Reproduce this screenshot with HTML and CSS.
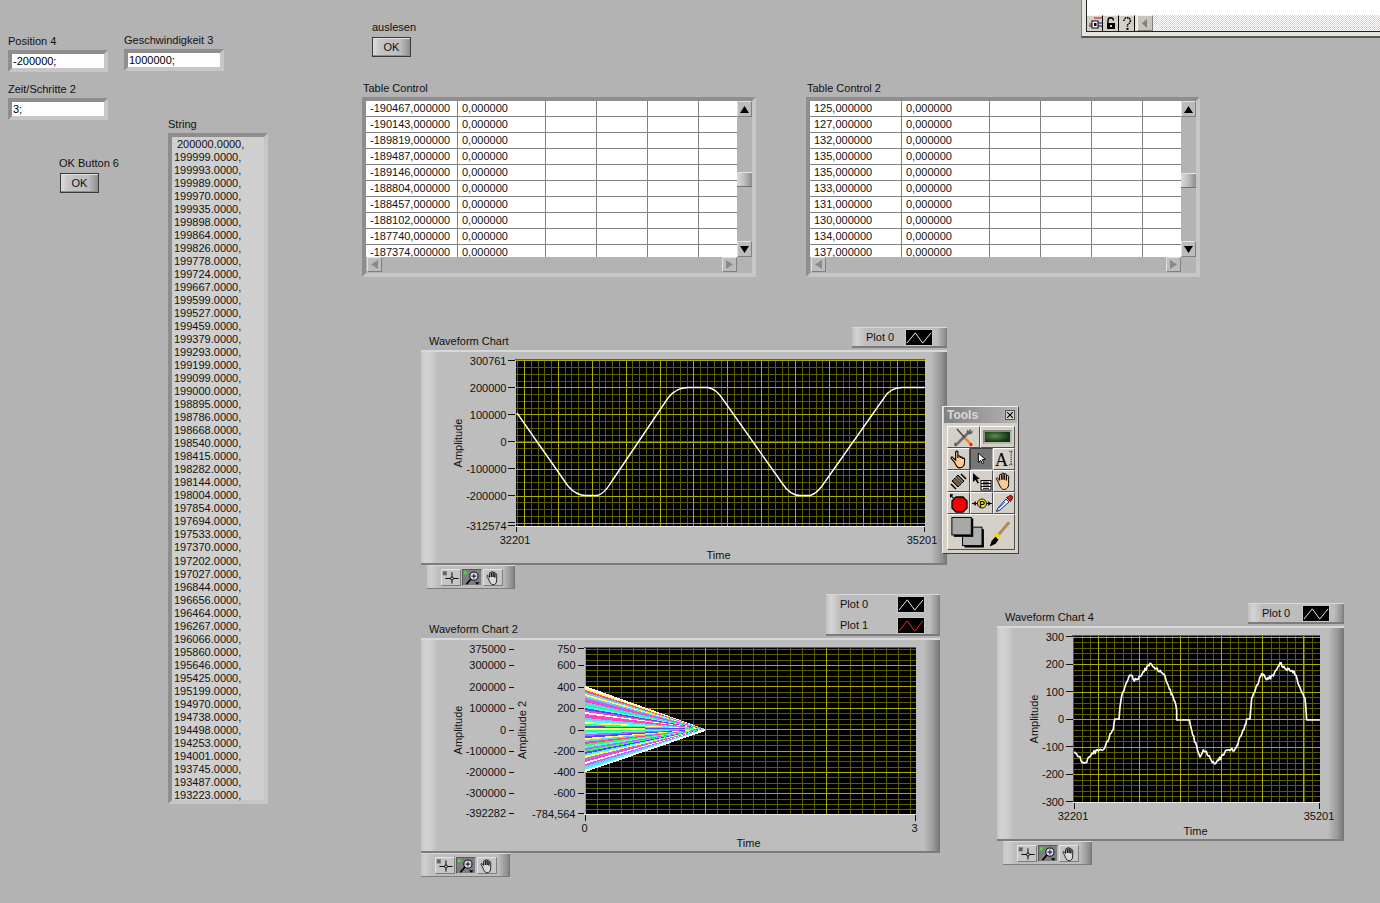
FILE: index.html
```html
<!DOCTYPE html>
<html lang="de">
<head>
<meta charset="utf-8">
<title>LabVIEW Front Panel</title>
<link rel="stylesheet" href="styles.css">
</head>
<body>
<svg class="defs" width="0" height="0" aria-hidden="true">
  <defs>
    <symbol id="i-cross" viewBox="0 0 19 16">
      <rect x="1" y="1" width="4" height="4" fill="#4d6b4d" stroke="#8a8a8a" stroke-width=".6"/>
      <path d="M10.5 2v12M3.5 8.5h14" stroke="#000" stroke-width="1" fill="none"/>
      <circle cx="10.5" cy="8.5" r="1.6" fill="#c4c4c4" stroke="#000" stroke-width=".9"/>
    </symbol>
    <symbol id="i-zoom" viewBox="0 0 19 16">
      <rect x="1" y="1" width="3" height="3" fill="#39e639"/>
      <circle cx="11.5" cy="6" r="4.3" fill="#d8dcf4" stroke="#000" stroke-width="1"/>
      <path d="M9 6h5M11.5 3.5v5" stroke="#000" stroke-width="1"/>
      <path d="M8.4 9 3.6 14.6" stroke="#000" stroke-width="1.8"/>
      <path d="M12.5 12.5h5l-2.5 2.5z" fill="#000"/>
    </symbol>
    <symbol id="i-hand" viewBox="0 0 16 16">
      <path d="M3.5 9 2 6.5C1.5 5.500 3 5 3.500 6L4.500 7.500V3.500a.9.9 0 0 1 1.800 0V7 2.500a.9.9 0 0 1 1.800 0V7 3a.9.9 0 0 1 1.800 0V7.500 4.500a.9.9 0 0 1 1.800 0V10C11.900 13 10 14.800 8 14.800 6 14.800 4.500 12 3.500 9Z" fill="currentColor" stroke="#000" stroke-width=".8"/>
    </symbol>
    <symbol id="i-trace" viewBox="0 0 28 16">
      <path d="M1 14 10 3 18 14 27 3" fill="none" stroke="currentColor" stroke-width="1"/>
    </symbol>
  </defs>
</svg>

<main class="canvas">

  <section class="win">
    <div class="win-body"></div>
    <div class="win-status">
      <span class="st-btn"><svg width="14" height="15" viewBox="0 0 14 15"><path d="M1 8h3M6 2h8" stroke="#e00000" stroke-width="1.200"/><path d="M1 10h3M10 7h4M10 10h4" stroke="#0000d0" stroke-width="1"/><rect x="4" y="5" width="6" height="7" fill="#fff" stroke="#000"/><rect x="6" y="7" width="2.500" height="3" fill="#000"/></svg></span>
      <span class="st-btn"><svg width="14" height="15" viewBox="0 0 14 15"><path d="M4 7V4.500a2.700 2.700 0 0 1 5.400 0" fill="none" stroke="#000" stroke-width="1.400"/><rect x="3" y="7" width="8" height="6" fill="#000"/><rect x="6" y="9" width="2" height="2" fill="#d4d0c8"/></svg></span>
      <span class="st-btn"><svg width="14" height="15" viewBox="0 0 14 15"><path d="M4 5a3.200 3.200 0 1 1 5 2.500L7.500 9v2" fill="none" stroke="#000" stroke-width="1.600" stroke-dasharray="1.600 .7"/><rect x="6.500" y="12" width="2" height="2" fill="#000"/></svg></span>
      <span class="st-arrow"><svg width="8" height="9" viewBox="0 0 8 9"><path d="M6 0v9L1 4.500z" fill="#808080"/></svg></span>
      <span class="st-fill"></span>
    </div>
  </section>

  <div class="ctl ctl-pos"><label class="lbl">Position 4</label><div class="field">-200000;</div></div>
  <div class="ctl ctl-gesch"><label class="lbl">Geschwindigkeit 3</label><div class="field">1000000;</div></div>
  <div class="ctl ctl-zeit"><label class="lbl">Zeit/Schritte 2</label><div class="field">3;</div></div>
  <div class="ctl ctl-ok6"><label class="lbl">OK Button 6</label><div class="okbtn">OK</div></div>
  <div class="ctl ctl-aus"><label class="lbl">auslesen</label><div class="okbtn">OK</div></div>

  <div class="ctl ctl-string">
    <label class="lbl">String</label>
    <div class="strbox"><div class="strtext"><span class="str-first">200000.0000,</span>
199999.0000,
199993.0000,
199989.0000,
199970.0000,
199935.0000,
199898.0000,
199864.0000,
199826.0000,
199778.0000,
199724.0000,
199667.0000,
199599.0000,
199527.0000,
199459.0000,
199379.0000,
199293.0000,
199199.0000,
199099.0000,
199000.0000,
198895.0000,
198786.0000,
198668.0000,
198540.0000,
198415.0000,
198282.0000,
198144.0000,
198004.0000,
197854.0000,
197694.0000,
197533.0000,
197370.0000,
197202.0000,
197027.0000,
196844.0000,
196656.0000,
196464.0000,
196267.0000,
196066.0000,
195860.0000,
195646.0000,
195425.0000,
195199.0000,
194970.0000,
194738.0000,
194498.0000,
194253.0000,
194001.0000,
193745.0000,
193487.0000,
193223.0000,</div></div>
  </div>

  <div class="ctl ctl-t1">
    <label class="lbl">Table Control</label>
    <div class="tbl">
      <div class="tbl-clip"><table>
        <tr><td>-190467,000000</td><td>0,000000</td><td></td><td></td><td></td><td></td></tr>
        <tr><td>-190143,000000</td><td>0,000000</td><td></td><td></td><td></td><td></td></tr>
        <tr><td>-189819,000000</td><td>0,000000</td><td></td><td></td><td></td><td></td></tr>
        <tr><td>-189487,000000</td><td>0,000000</td><td></td><td></td><td></td><td></td></tr>
        <tr><td>-189146,000000</td><td>0,000000</td><td></td><td></td><td></td><td></td></tr>
        <tr><td>-188804,000000</td><td>0,000000</td><td></td><td></td><td></td><td></td></tr>
        <tr><td>-188457,000000</td><td>0,000000</td><td></td><td></td><td></td><td></td></tr>
        <tr><td>-188102,000000</td><td>0,000000</td><td></td><td></td><td></td><td></td></tr>
        <tr><td>-187740,000000</td><td>0,000000</td><td></td><td></td><td></td><td></td></tr>
        <tr><td>-187374,000000</td><td>0,000000</td><td></td><td></td><td></td><td></td></tr>
      </table></div>
      <div class="vbar">
        <span class="sb"><svg width="9" height="7" viewBox="0 0 9 7"><path d="M4.500 0 9 7H0z" fill="#000"/></svg></span>
        <span class="thumb thumb-a"></span>
        <span class="sb"><svg width="9" height="7" viewBox="0 0 9 7"><path d="M4.500 7 9 0H0z" fill="#000"/></svg></span>
      </div>
      <div class="hbar">
        <span class="sb"><svg width="7" height="9" viewBox="0 0 7 9"><path d="M0 4.500 7 0v9z" fill="#8a8a8a"/></svg></span>
        <span class="sb"><svg width="7" height="9" viewBox="0 0 7 9"><path d="M7 4.500 0 0v9z" fill="#8a8a8a"/></svg></span>
      </div>
    </div>
  </div>

  <div class="ctl ctl-t2">
    <label class="lbl">Table Control 2</label>
    <div class="tbl">
      <div class="tbl-clip"><table>
        <tr><td>125,000000</td><td>0,000000</td><td></td><td></td><td></td><td></td></tr>
        <tr><td>127,000000</td><td>0,000000</td><td></td><td></td><td></td><td></td></tr>
        <tr><td>132,000000</td><td>0,000000</td><td></td><td></td><td></td><td></td></tr>
        <tr><td>135,000000</td><td>0,000000</td><td></td><td></td><td></td><td></td></tr>
        <tr><td>135,000000</td><td>0,000000</td><td></td><td></td><td></td><td></td></tr>
        <tr><td>133,000000</td><td>0,000000</td><td></td><td></td><td></td><td></td></tr>
        <tr><td>131,000000</td><td>0,000000</td><td></td><td></td><td></td><td></td></tr>
        <tr><td>130,000000</td><td>0,000000</td><td></td><td></td><td></td><td></td></tr>
        <tr><td>134,000000</td><td>0,000000</td><td></td><td></td><td></td><td></td></tr>
        <tr><td>137,000000</td><td>0,000000</td><td></td><td></td><td></td><td></td></tr>
      </table></div>
      <div class="vbar">
        <span class="sb"><svg width="9" height="7" viewBox="0 0 9 7"><path d="M4.500 0 9 7H0z" fill="#000"/></svg></span>
        <span class="thumb thumb-b"></span>
        <span class="sb"><svg width="9" height="7" viewBox="0 0 9 7"><path d="M4.500 7 9 0H0z" fill="#000"/></svg></span>
      </div>
      <div class="hbar">
        <span class="sb"><svg width="7" height="9" viewBox="0 0 7 9"><path d="M0 4.500 7 0v9z" fill="#8a8a8a"/></svg></span>
        <span class="sb"><svg width="7" height="9" viewBox="0 0 7 9"><path d="M7 4.500 0 0v9z" fill="#8a8a8a"/></svg></span>
      </div>
    </div>
  </div>

  <!-- Waveform Chart -->
  <label class="lbl chart-title ct1">Waveform Chart</label>
  <div class="legend lg1">
    <div class="lg-row"><span class="lg-name">Plot 0</span><span class="swatch swatch-w"><svg width="26" height="15" viewBox="0 0 28 16"><use href="#i-trace"/></svg></span></div>
  </div>
  <section class="panel pn1">
    <svg class="chart" id="chart1" width="526" height="215" viewBox="421 350 526 215">
      <rect class="plot-bg" x="516" y="360" width="409" height="166"/>
      <g class="grid"></g>
      <path class="curve" d="M517 413 568 486Q576 495.500 586 495.500L597 495.500Q604 494 610 484L668 398Q676 387.500 688 387.500L708 387.500Q716 389 722 398L782 483Q790 495.500 800 495.500L810 495.500Q816 494 822 486L884 398Q890 387.500 902 387.500L924.500 387.500"/>
      <path class="plot-edge-t" d="M515 359.500h410"/><path class="plot-edge-b" d="M515 526.500h410"/>
      <path class="tick" d="M508 360.500h7M508 387.500h7M508 414.500h7M508 441.500h7M508 468.500h7M508 495.500h7M508 522.500h7M508 525.500h7M516.500 527v5M924.500 527v5"/>
      <g class="ticks">
        <text class="e" x="506.500" y="365">300761</text><text class="e" x="506.500" y="392">200000</text><text class="e" x="506.500" y="419">100000</text><text class="e" x="506.500" y="446">0</text><text class="e" x="506.500" y="473">-100000</text><text class="e" x="506.500" y="500">-200000</text><text class="e" x="506.500" y="530">-312574</text>
        <text class="m" x="515" y="544">32201</text><text class="m" x="922" y="544">35201</text><text class="m" x="718.500" y="559">Time</text>
        <text class="m" transform="translate(462 443) rotate(-90)">Amplitude</text>
      </g>
    </svg>
  </section>
  <div class="palette pl1">
    <span class="pb"><svg width="19" height="16"><use href="#i-cross"/></svg></span>
    <span class="pb pb-on"><svg width="19" height="16"><use href="#i-zoom"/></svg></span>
    <span class="pb"><svg width="19" height="16"><use href="#i-hand" class="hand-w"/></svg></span>
  </div>

  <!-- Waveform Chart 2 -->
  <label class="lbl chart-title ct2">Waveform Chart 2</label>
  <div class="legend lg2">
    <div class="lg-row"><span class="lg-name">Plot 0</span><span class="swatch swatch-w"><svg width="26" height="15" viewBox="0 0 28 16"><use href="#i-trace"/></svg></span></div>
    <div class="lg-row"><span class="lg-name">Plot 1</span><span class="swatch swatch-r"><svg width="26" height="15" viewBox="0 0 28 16"><use href="#i-trace"/></svg></span></div>
  </div>
  <section class="panel pn2">
    <svg class="chart" id="chart2" width="519" height="215" viewBox="421 638 519 215">
      <rect class="plot-bg" x="585" y="648" width="331" height="166"/>
      <g class="grid"></g>
      <g class="rainbow"></g>
      <path class="plot-edge-t" d="M584 647.500h332"/><path class="plot-edge-b" d="M584 814.500h332"/>
      <path class="tick" d="M509 649.500h5M509 665.500h5M509 687.500h5M509 708.500h5M509 730.500h5M509 751.500h5M509 772.500h5M509 793.500h5M509 813.500h5M578 648.500h6M578 665.500h6M578 687.500h6M578 708.500h6M578 730.500h6M578 751.500h6M578 772.500h6M578 793.500h6M578 813.500h6M585.500 815v6M915.500 815v6"/>
      <g class="ticks">
        <text class="e" x="506" y="653">375000</text><text class="e" x="506" y="669">300000</text><text class="e" x="506" y="691">200000</text><text class="e" x="506" y="712">100000</text><text class="e" x="506" y="734">0</text><text class="e" x="506" y="755">-100000</text><text class="e" x="506" y="776">-200000</text><text class="e" x="506" y="797">-300000</text><text class="e" x="506" y="817">-392282</text>
        <text class="e" x="575.500" y="653">750</text><text class="e" x="575.500" y="669">600</text><text class="e" x="575.500" y="691">400</text><text class="e" x="575.500" y="712">200</text><text class="e" x="575.500" y="734">0</text><text class="e" x="575.500" y="755">-200</text><text class="e" x="575.500" y="776">-400</text><text class="e" x="575.500" y="797">-600</text><text class="e" x="575.500" y="818">-784,564</text>
        <text class="m" x="584.500" y="832">0</text><text class="m" x="914.500" y="832">3</text><text class="m" x="748.500" y="847">Time</text>
        <text class="m" transform="translate(462 730) rotate(-90)">Amplitude</text>
        <text class="m" transform="translate(526 730) rotate(-90)">Amplitude 2</text>
      </g>
    </svg>
  </section>
  <div class="palette pl2">
    <span class="pb"><svg width="19" height="16"><use href="#i-cross"/></svg></span>
    <span class="pb pb-on"><svg width="19" height="16"><use href="#i-zoom"/></svg></span>
    <span class="pb"><svg width="19" height="16"><use href="#i-hand" class="hand-w"/></svg></span>
  </div>

  <!-- Waveform Chart 4 -->
  <label class="lbl chart-title ct4">Waveform Chart 4</label>
  <div class="legend lg4">
    <div class="lg-row"><span class="lg-name">Plot 0</span><span class="swatch swatch-w"><svg width="26" height="15" viewBox="0 0 28 16"><use href="#i-trace"/></svg></span></div>
  </div>
  <section class="panel pn4">
    <svg class="chart" id="chart4" width="347" height="215" viewBox="997 626 347 215">
      <rect class="plot-bg" x="1073" y="636" width="247" height="166"/>
      <g class="grid"></g>
      <g transform="translate(995 595) scale(.33333)">
        <polyline class="curve-thick" points=""/>
      </g>
      <path class="plot-edge-t" d="M1072 635.500h248"/><path class="plot-edge-b" d="M1072 802.500h248"/>
      <path class="tick" d="M1066 636.500h7M1066 664.500h7M1066 691.500h7M1066 719.500h7M1066 746.500h7M1066 774.500h7M1066 801.500h7M1074.500 803v6M1319.500 803v6"/>
      <g class="ticks">
        <text class="e" x="1064" y="641">300</text><text class="e" x="1064" y="668">200</text><text class="e" x="1064" y="696">100</text><text class="e" x="1064" y="723">0</text><text class="e" x="1064" y="751">-100</text><text class="e" x="1064" y="778">-200</text><text class="e" x="1064" y="806">-300</text>
        <text class="m" x="1073" y="820">32201</text><text class="m" x="1319" y="820">35201</text><text class="m" x="1195.500" y="835">Time</text>
        <text class="m" transform="translate(1038 719) rotate(-90)">Amplitude</text>
      </g>
    </svg>
  </section>
  <div class="palette pl4">
    <span class="pb"><svg width="19" height="16"><use href="#i-cross"/></svg></span>
    <span class="pb pb-on"><svg width="19" height="16"><use href="#i-zoom"/></svg></span>
    <span class="pb"><svg width="19" height="16"><use href="#i-hand" class="hand-w"/></svg></span>
  </div>

  <!-- Tools palette -->
  <aside class="tools">
    <header class="tools-title"><span>Tools</span><span class="tools-x"><svg width="7" height="7" viewBox="0 0 7 7"><path d="M0 0l7 7M7 0 0 7" stroke="#000" stroke-width="1.300"/></svg></span></header>
    <div class="tools-auto">
      <span class="tool"><svg width="22" height="20" viewBox="0 0 22 20"><path d="M18 3 4 17" stroke="#6e6e6e" stroke-width="2.600"/><path d="M15 1.500c-1 2 .5 4.500 3.500 3.500l2-2-1.500 3.500-3 1-2.500-2.500zM2 15l3 3-2.500 1.500-1.500-1.500z" fill="#5a5a5a"/><path d="M4 2 12 11" stroke="#444" stroke-width="1.500"/><path d="M12 11l5 5.500" stroke="#f08018" stroke-width="2.600"/><path d="M17 16.500l2 2" stroke="#d81818" stroke-width="2.600"/></svg></span>
      <span class="tool"><span class="led"></span></span>
    </div>
    <div class="tools-grid">
      <span class="tool"><svg width="20" height="20" viewBox="0 0 18 18"><path d="M5 12 2 8.500c-.7-1 .6-1.800 1.300-1L6 10V3c0-1.500 2-1.500 2 0v5l0-1c0-1.300 2-1.300 2 0v1c0-1.200 2-1.200 2 0v1c0-1 2-1 2 0v3c0 3-2 5-4.500 5S6.500 15 5 12Z" fill="#ffc994" stroke="#000" stroke-width="1"/></svg></span>
      <span class="tool tool-on"><svg width="11" height="14" viewBox="0 0 14 17"><path d="M3 1v12l3-2.800 2 4.300 2-1-2-4.200 4-.3z" fill="#fff" stroke="#000" stroke-width="1.200"/></svg></span>
      <span class="tool"><svg width="21" height="20" viewBox="0 0 21 20"><text class="glyph-a" x="1" y="17">A</text><path d="M16 2h4M18 2v14M16 16h4" stroke="#000" stroke-width=".9" stroke-dasharray="1.200 .8"/></svg></span>

      <span class="tool"><svg width="19" height="19" viewBox="0 0 19 19"><path d="M9 3 15 9 9 15 3 9z" fill="#5a4a38" stroke="#000"/><path d="M6 5l7 7M4.500 7l7 7M8 4l7 7" stroke="#c8b498" stroke-width=".6"/><path d="M2 12l5 5M12 2l5 5" stroke="#000" stroke-width="1.600"/></svg></span>
      <span class="tool"><svg width="20" height="19" viewBox="0 0 20 19"><path d="M1 1v9l2.500-2 2 3.500 1.500-.8-2-3.500 3-.2z" fill="#000"/><rect x="9" y="8.500" width="10" height="9.500" fill="#fff" stroke="#000"/><path d="M9 11.500h10M9 14.500h10M11 10.200h6M11 13h6M11 16.300h6" stroke="#000" stroke-width="1"/></svg></span>
      <span class="tool"><svg width="20" height="20" viewBox="0 0 16 16"><path d="M3.500 9 2 6.500C1.500 5.500 3 5 3.500 6L4.500 7.500V3.500a.9.9 0 0 1 1.800 0V7 2.500a.9.9 0 0 1 1.800 0V7 3a.9.9 0 0 1 1.800 0V7.500 4.500a.9.9 0 0 1 1.800 0V10C11.900 13 10 14.800 8 14.800 6 14.800 4.500 12 3.500 9Z" fill="#ffc994" stroke="#000" stroke-width=".8"/></svg></span>

      <span class="tool"><svg width="20" height="20" viewBox="0 0 20 20"><path d="M7 4h7l4 4v7l-4 4H7l-4-4V8z" fill="#f00000" stroke="#000" stroke-width="1.300"/><path d="M1 1v4l1.300-1.200 2 2 .8-.8-2-2L4.500 1.500z" fill="#000"/></svg></span>
      <span class="tool"><svg width="20" height="15" viewBox="0 0 21 15"><path d="M0 7.500h21" stroke="#000"/><path d="M1 7.500 4 5v5zM20 7.500 17 5v5z" fill="#000"/><circle cx="10.500" cy="7.500" r="4.700" fill="#f8e820" stroke="#000"/><text class="glyph-p" x="10.500" y="10.700">P</text></svg></span>
      <span class="tool"><svg width="19" height="19" viewBox="0 0 19 19"><path d="M11 5 3 14l-1.500 3.500L5 16l9-8z" fill="#e4eeff" stroke="#1c2c6c" stroke-width="1"/><path d="M4 14l6-6" stroke="#3070e8" stroke-width="1"/><path d="M11.500 3.500l4 4 1.500-2.500c1-1 .5-3-1-3.500-1-.3-2 .3-2.500 1z" fill="#e81818" stroke="#000" stroke-width=".8"/></svg></span>
    </div>
    <div class="tools-color">
      <svg width="68" height="35" viewBox="0 0 68 35">
        <rect x="17" y="14" width="20" height="19" fill="#000"/><rect x="15" y="12" width="20" height="19" fill="#b0b0b0" stroke="#000"/>
        <rect x="6" y="3" width="20" height="19" fill="#000"/><rect x="4" y="2" width="20" height="18" fill="#a8a8a8" stroke="#000"/>
        <path d="M63 7 52 20" stroke="#b08858" stroke-width="3"/><path d="M52.500 19.500l-4.500 5" stroke="#f8d800" stroke-width="5"/><path d="M49 22l3 3-3 4-6 3 2-6z" fill="#000"/>
      </svg>
    </div>
  </aside>
</main>
<script src="script.js"></script>
</body>
</html>
```

FILE: styles.css
```css
* { box-sizing: border-box; }
html, body { margin: 0; padding: 0; background: #b3b3b3; }
body { font-family: "Liberation Sans", Arial, sans-serif; font-size: 11px; color: #000; overflow: hidden; }
.defs { position: absolute; }

.canvas { position: relative; width: 1380px; height: 903px; background: #b3b3b3; overflow: hidden; }

.lbl { display: block; font-size: 11px; line-height: 13px; white-space: nowrap; color: #111; }

/* Free-canvas placement of front-panel objects */
.ctl { position: absolute; display: flex; flex-direction: column; }
.ctl-pos { left: 8px; top: 35px; }
.ctl-gesch { left: 124px; top: 34px; }
.ctl-zeit { left: 8px; top: 83px; }
.ctl-ok6 { left: 59px; top: 157px; gap: 3px; }
.ctl-aus { left: 372px; top: 21px; gap: 3px; }
.ctl-string { left: 168px; top: 118px; gap: 2px; }
.ctl-t1 { left: 362px; top: 82px; gap: 2px; }
.ctl-t2 { left: 806px; top: 82px; gap: 2px; }
.ctl-t1 .lbl, .ctl-t2 .lbl { margin-left: 1px; }

.field {
  width: 100px; height: 22px;
  margin-top: 2px;
  background: #fdfdfd;
  border-style: solid; border-width: 4px;
  border-color: #8e8e8e #c6c6c6 #c6c6c6 #8e8e8e;
  padding-left: 1px;
  font-size: 11px; line-height: 14px;
}

.okbtn {
  width: 39px; height: 20px;
  margin-left: 1px;
  border: 1px solid #3a3a3a;
  background: linear-gradient(90deg, #dcdcdc 0, #c4c4c4 20%, #bcbcbc 75%, #8c8c8c 100%);
  box-shadow: inset 0 1px 0 #e4e4e4, inset 0 -1px 0 #909090;
  text-align: center; font-size: 11px; line-height: 18px; color: #111;
}
.ctl-aus .okbtn { margin-left: 0; }

.strbox {
  width: 100px; height: 671px;
  border-style: solid; border-width: 4px;
  border-color: #8e8e8e #c6c6c6 #c6c6c6 #8e8e8e;
  background: #cfcfcf;
  padding: 1px 0 0 2px;
}
.strtext { white-space: pre-line; font-size: 11px; line-height: 13.02px; color: #111; }
.str-first { padding-left: 3px; }

.tbl {
  display: grid;
  grid-template-columns: 371px 15px;
  grid-template-rows: 156px 16px;
  width: 394px; height: 180px;
  border-style: solid; border-width: 4px;
  border-color: #8e8e8e #c6c6c6 #c6c6c6 #8e8e8e;
  background: #b3b3b3;
}
.tbl-clip { overflow: hidden; background: #fff; }
.tbl table { border-collapse: separate; border-spacing: 0; table-layout: fixed; width: 371px; }
.tbl td {
  height: 16px; padding: 0 0 0 4px;
  border-right: 1px solid #808080; border-bottom: 1px solid #808080;
  font-size: 11px; line-height: 15px; white-space: nowrap; color: #111;
}
.tbl td:nth-child(1) { width: 92px; }
.tbl td:nth-child(2) { width: 88px; }
.tbl td:nth-child(3), .tbl td:nth-child(4), .tbl td:nth-child(5) { width: 51px; }
.tbl td:nth-child(6) { width: 38px; border-right: 0; }

.sb {
  display: flex; align-items: center; justify-content: center;
  width: 15px; height: 15px;
  background: #bcbcbc;
  border-style: solid; border-width: 1px;
  border-color: #e0e0e0 #808080 #808080 #e0e0e0;
}
.vbar { position: relative; display: flex; flex-direction: column; justify-content: space-between; background: #b3b3b3; }
.vbar .sb { height: 16px; }
.hbar { display: flex; justify-content: space-between; background: #b3b3b3; padding-left: 1px; height: 16px; }
.thumb {
  position: absolute; left: 0; width: 15px; height: 15px;
  background: linear-gradient(90deg, #dadada, #c0c0c0 45%, #8e8e8e);
  border-top: 1px solid #e4e4e4; border-bottom: 1px solid #707070;
}
.thumb-a { top: 71px; }
.thumb-b { top: 72px; }

/* Charts */
.chart-title { position: absolute; }
.ct1 { left: 429px; top: 335px; }
.ct2 { left: 429px; top: 623px; }
.ct4 { left: 1005px; top: 611px; }

.panel, .legend, .palette {
  background-color: #bdbdbd;
  background-repeat: no-repeat;
}
.panel {
  position: absolute;
  background-image:
    linear-gradient(#d8d8d8, #d8d8d8),
    linear-gradient(#7c7c7c, #7c7c7c),
    linear-gradient(90deg, #c4c4c4 0, #d4d4d4 4px, #cfcfcf 10px, #bdbdbd 16px),
    linear-gradient(90deg, #bdbdbd 0, #9a9a9a 9px, #7a7a7a 15px, #707070 16px);
  background-size: 100% 2px, 100% 2px, 16px 100%, 16px 100%;
  background-position: 0 0, 0 100%, 0 0, 100% 0;
}
.pn1 { left: 421px; top: 350px; width: 526px; height: 215px; }
.pn2 { left: 421px; top: 638px; width: 519px; height: 215px; }
.pn4 { left: 997px; top: 626px; width: 347px; height: 215px; }

.chart { display: block; }
.plot-bg { fill: #000; }
.plot-edge-t { stroke: #5a5a5a; stroke-width: 1; }
.plot-edge-b { stroke: #ececec; stroke-width: 1; }
.tick { stroke: #111; stroke-width: 1; fill: none; shape-rendering: crispEdges; }
.ticks text { font-family: "Liberation Sans", Arial, sans-serif; font-size: 11px; fill: #111; }
.ticks .e { text-anchor: end; }
.ticks .m { text-anchor: middle; }
.grid line { shape-rendering: crispEdges; stroke-width: 1; }
.grid .mn { stroke: #5c5c00; }
.grid .mj { stroke: #acac00; }
.curve { fill: none; stroke: #fff; stroke-width: 1.400; stroke-linejoin: round; }
.curve-thick { fill: none; stroke: #fff; stroke-width: 5; stroke-linejoin: round; }
.rainbow line { shape-rendering: crispEdges; stroke-width: 2; }

.legend {
  position: absolute;
  display: flex; flex-direction: column; gap: 4px;
  padding: 2px 14px 2px 14px;
  background-image:
    linear-gradient(#d8d8d8, #d8d8d8),
    linear-gradient(#7c7c7c, #7c7c7c),
    linear-gradient(90deg, #c0c0c0 0, #d4d4d4 5px, #bdbdbd 14px),
    linear-gradient(90deg, #bdbdbd 0, #8a8a8a 9px, #707070 10px);
  background-size: 100% 1px, 100% 2px, 14px 100%, 10px 100%;
  background-position: 0 0, 0 100%, 0 0, 100% 0;
}
.lg1 { left: 852px; top: 327px; width: 95px; height: 21px; }
.lg2 { left: 826px; top: 594px; width: 114px; height: 42px; }
.lg4 { left: 1248px; top: 603px; width: 96px; height: 21px; }
.lg-row { display: flex; align-items: center; justify-content: space-between; height: 17px; font-size: 11px; color: #111; }
.lg-name { margin-top: -2px; }
.swatch {
  display: flex; align-items: center; justify-content: center;
  width: 28px; height: 17px; background: #000; border: 1px solid #c8c8c8;
}
.lg2 .swatch { margin-right: 1px; }
.swatch-w { color: #fff; }
.swatch-r { color: #ff3030; }

.palette {
  position: absolute;
  display: flex; align-items: center; gap: 1px;
  padding: 1px 0 0 14px;
  height: 24px;
  background-image:
    linear-gradient(#d8d8d8, #d8d8d8),
    linear-gradient(#7c7c7c, #7c7c7c),
    linear-gradient(90deg, #c4c4c4, #d0d0d0 4px, #bdbdbd 12px),
    linear-gradient(90deg, #bdbdbd, #8a8a8a 10px, #707070 12px);
  background-size: 100% 1px, 100% 1px, 12px 100%, 12px 100%;
  background-position: 0 0, 0 100%, 0 0, 100% 0;
}
.pl1 { left: 427px; top: 565px; width: 88px; }
.pl2 { left: 421px; top: 853px; width: 89px; }
.pl4 { left: 1003px; top: 841px; width: 89px; }
.pb {
  display: flex; width: 20px; height: 17px; align-items: center; justify-content: center;
  background: #c6c6c6;
  border-style: solid; border-width: 1px;
  border-color: #e4e4e4 #7c7c7c #7c7c7c #e4e4e4;
  color: #d8d8d8;
}
.pb-on { background: #7e7e7e; border-color: #5c5c5c #bcbcbc #bcbcbc #5c5c5c; }
.hand-w { color: #d8d8d8; }

/* Tools floating palette */
.tools {
  position: absolute; left: 942px; top: 406px; width: 77px; height: 148px;
  display: flex; flex-direction: column;
  padding: 0 3px 0 4px;
  background: #d4d0c8;
  border-style: solid; border-width: 1px;
  border-color: #f0f0f0 #404040 #404040 #f0f0f0;
}
.tools-title {
  display: flex; align-items: center; justify-content: space-between;
  height: 16px; margin: 0 -2px 3px -3px; padding: 0 2px 0 3px;
  background: linear-gradient(90deg, #808080, #b4b4b4);
  font-size: 12px; font-weight: bold; color: #d8d8d8;
}
.tools-x {
  display: flex; align-items: center; justify-content: center;
  width: 10px; height: 10px; background: #d4d0c8;
  border: 1px solid #555;
}
.tools-x svg { width: 6px; height: 6px; }
.tool {
  display: flex; align-items: center; justify-content: center;
  background: #d4d0c8;
  border-style: solid; border-width: 1px;
  border-color: #fafafa #505050 #505050 #fafafa;
}
.tools-auto { display: grid; grid-template-columns: 33px 35px; height: 22px; }
.tools-grid { display: grid; grid-template-columns: 23px 23px 22px; grid-auto-rows: 22px; }
.tool-on { background: #767676; border-color: #404040 #b0b0b0 #b0b0b0 #404040; }
.led {
  display: block; width: 29px; height: 14px;
  border: 2px solid; border-color: #8a8a7c #b8b8a8 #b8b8a8 #8a8a7c;
  background: radial-gradient(ellipse at 40% 40%, #5a8c4c, #123414 70%);
}
.tools-color { height: 36px; border-style: solid; border-width: 1px; border-color: #fafafa #505050 #505050 #fafafa; display: flex; }
.glyph-a { font-family: "Liberation Serif", serif; font-size: 19px; fill: #000; }
.glyph-p { font-family: "Liberation Sans", sans-serif; font-size: 9px; font-weight: bold; text-anchor: middle; fill: #000; }

/* Window corner at top right */
.win {
  position: absolute; left: 1081px; top: 0; width: 299px; height: 38px;
  display: flex; flex-direction: column;
  padding: 0 0 4px 4px;
  background: #e6e4dc;
  border-left: 1px solid #808080;
  border-bottom: 2px solid #555;
}
.win-body { height: 15px; background: #fff; border-left: 1px solid #222; }
.win-status { display: flex; height: 17px; border-left: 1px solid #222; border-bottom: 1px solid #222; }
.st-btn {
  display: flex; width: 16px; height: 16px; align-items: center; justify-content: center;
  background: #d4d0c8;
  border-right: 1px solid #000;
  border-top: 1px solid #f4f4f4;
}
.st-arrow {
  display: flex; width: 16px; height: 16px; margin-left: 2px; align-items: center; justify-content: center;
  background: #c8c4bc;
  border-style: solid; border-width: 1px;
  border-color: #f4f4f4 #808080 #808080 #f4f4f4;
}
.st-fill {
  flex: 1;
  background-color: #fff;
  background-image: conic-gradient(#d8d5ce 25%, transparent 0 50%, #d8d5ce 0 75%, transparent 0);
  background-size: 2px 2px;
}
```

FILE: script.js
```js
const NS = 'http://www.w3.org/2000/svg';

const charts = [
  { id: 'chart1', x: [516, 925], y: [360, 526], v: [524, 33.9, 5], h: [360.2, 27.1, 4] },
  { id: 'chart2', x: [585, 916], y: [648, 814], v: [585, 120.3, 10], h: [665, 21.4, 4] },
  { id: 'chart4', x: [1073, 1320], y: [636, 802], v: [1098, 41.1, 5], h: [636.7, 27.5, 5] }
];

function line(parent, x1, y1, x2, y2, cls, color) {
  const el = document.createElementNS(NS, 'line');
  el.setAttribute('x1', x1);
  el.setAttribute('y1', y1);
  el.setAttribute('x2', x2);
  el.setAttribute('y2', y2);
  if (cls) el.setAttribute('class', cls);
  if (color) el.setAttribute('stroke', color);
  parent.appendChild(el);
}

function positions(start, step, lo, hi) {
  const out = [];
  let p = start;
  while (p - step >= lo) p -= step;
  for (; p <= hi; p += step) out.push(p);
  return out;
}

charts.forEach(c => {
  const g = document.querySelector('#' + c.id + ' .grid');
  const crisp = p => Math.round(p) + 0.5;
  const [x0, x1] = c.x;
  const [y0, y1] = c.y;
  positions(c.v[0], c.v[1] / c.v[2], x0, x1 - 1).forEach(p => line(g, crisp(p), y0, crisp(p), y1, 'mn'));
  positions(c.h[0], c.h[1] / c.h[2], y0, y1 - 1).forEach(p => line(g, x0, crisp(p), x1, crisp(p), 'mn'));
  positions(c.v[0], c.v[1], x0, x1 - 1).forEach(p => line(g, crisp(p), y0, crisp(p), y1, 'mj'));
  positions(c.h[0], c.h[1], y0, y1 - 1).forEach(p => line(g, x0, crisp(p), x1, crisp(p), 'mj'));
});

// Many overlaid plots converging on one point (Waveform Chart 2).
const colors = ['#ffffff', '#ff44bb', '#33ff44', '#5544ff', '#44ffff', '#ffff55', '#ff4488', '#bb66ff', '#22ff88', '#66ccff'];
const rainbow = document.querySelector('#chart2 .rainbow');
let seed = 7;
for (let y = 687; y <= 772; y += 2) {
  seed = (seed * 31 + 11) % 97;
  const edge = y < 688 || y > 770;
  line(rainbow, 585, y, 705, 730, '', edge ? '#ffffff' : colors[seed % colors.length]);
}

// Waveform Chart 4: noisy trace, in coordinates of 1/3 px; flat stretches stay clean.
const base = [[238,470],[245,478],[255,490],[265,505],[275,500],[285,485],[297,472],[310,465],[325,465],[335,445],[345,420],[355,400],[360,372],[372,372],[378,310],[390,275],[405,238],[418,255],[435,248],[450,225],[465,205],[480,220],[505,235],[520,275],[540,320],[545,345],[545,375],[583,375],[590,410],[605,455],[615,488],[625,465],[640,480],[658,510],[680,485],[695,465],[720,465],[735,430],[750,395],[755,372],[765,372],[770,310],[785,275],[800,235],[815,255],[835,240],[855,205],[870,220],[900,235],[915,280],[930,310],[935,375],[975,375]];
const pts = [];
let n = 3;
for (let i = 0; i < base.length - 1; i++) {
  const [ax, ay] = base[i];
  const [bx, by] = base[i + 1];
  const flat = ay === by && (ay === 372 || ay === 375);
  const steps = Math.max(1, Math.round((bx - ax) / 3));
  for (let s = 0; s < steps; s++) {
    n = (n * 37 + 17) % 101;
    const noise = flat ? 0 : (n % 11) - 5;
    pts.push((ax + (bx - ax) * s / steps).toFixed(1) + ',' + (ay + (by - ay) * s / steps + noise).toFixed(1));
  }
}
pts.push('975,375');
document.querySelector('#chart4 .curve-thick').setAttribute('points', pts.join(' '));
```
